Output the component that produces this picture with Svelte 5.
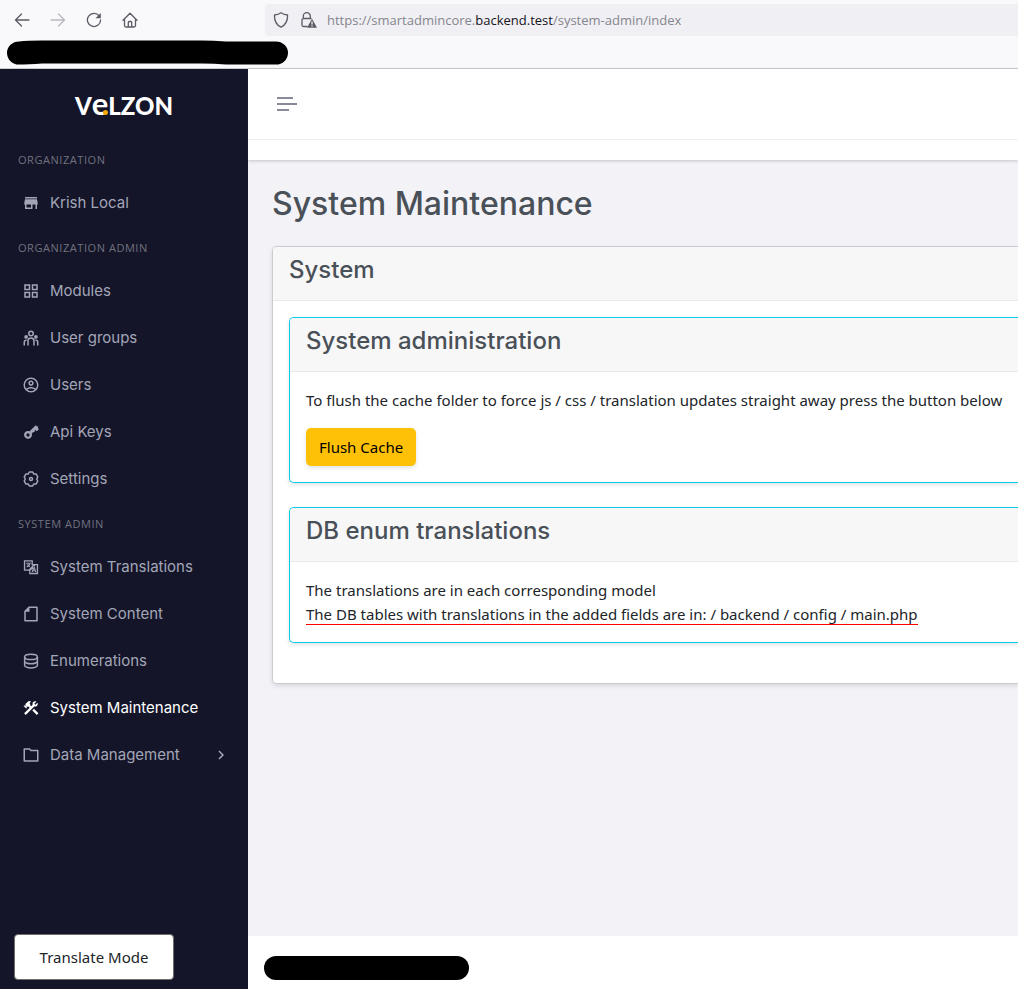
<script>
  const icons = {
    store: 'M12,18H6V14H12M21,14V12L20,7H4L3,12V14H4V20H14V14H18V20H20V14M20,4H4V6H20V4Z',
    modules: 'M3 3h8v8H3zM3 13h8v8H3zM13 3h8v8h-8zM13 13h8v8h-8zM15 5v4h4V5zM15 15v4h4v-4zM5 5v4h4V5zM5 15v4h4v-4z',
    team: 'M12 11a5 5 0 0 1 5 5v6h-2v-6a3 3 0 0 0-2.824-2.995L12 13a3 3 0 0 0-2.995 2.824L9 16v6H7v-6a5 5 0 0 1 5-5zm-6.5 3c.279 0 .55.033.81.094a5.947 5.947 0 0 0-.301 1.575L6 16v.086a1.492 1.492 0 0 0-.356-.08L5.500 16a1.500 1.500 0 0 0-1.493 1.356L4 17.500V22H2v-4.500A3.500 3.500 0 0 1 5.500 14zm13 0a3.500 3.500 0 0 1 3.500 3.500V22h-2v-4.500a1.500 1.500 0 0 0-1.356-1.493L18.500 16c-.175 0-.343.03-.5.085V16c0-.666-.108-1.306-.309-1.904.259-.063.53-.096.809-.096zm-13-6a2.500 2.500 0 1 1 0 5 2.500 2.500 0 0 1 0-5zm13 0a2.500 2.500 0 1 1 0 5 2.500 2.500 0 0 1 0-5zM12 2a4 4 0 1 1 0 8 4 4 0 0 1 0-8zm0 2a2 2 0 1 0 0 4 2 2 0 0 0 0-4z',
    user: 'M12,2A10,10 0 0,0 2,12A10,10 0 0,0 12,22A10,10 0 0,0 22,12A10,10 0 0,0 12,2M7.07,18.28C7.5,17.38 10.12,16.5 12,16.5C13.88,16.5 16.5,17.38 16.93,18.28C15.57,19.36 13.86,20 12,20C10.14,20 8.43,19.36 7.07,18.28M18.36,16.83C16.93,15.09 13.46,14.5 12,14.5C10.54,14.5 7.07,15.09 5.64,16.83C4.62,15.5 4,13.82 4,12C4,7.59 7.59,4 12,4C16.41,4 20,7.59 20,12C20,13.82 19.38,15.5 18.36,16.83M12,6C10.06,6 8.5,7.56 8.5,9.5C8.5,11.44 10.06,13 12,13C13.94,13 15.5,11.44 15.5,9.5C15.5,7.56 13.94,6 12,6M12,11A1.5,1.5 0 0,1 10.5,9.5A1.5,1.5 0 0,1 12,8A1.5,1.5 0 0,1 13.5,9.5A1.5,1.5 0 0,1 12,11Z',
    key: 'M8 10.500a5.500 5.500 0 0 1 2.200.5L18.300 3l1.700 1.700 1.700-.3-.6 2.100 1.500 1.700-2.900 2.900-2-1.900-1 1 .3 1.700-2.300.4-1.700 1.700A5.300 5.300 0 1 1 8 10.500zM8 13.800a2.200 2.200 0 1 0 0 4.400 2.200 2.200 0 0 0 0-4.400z',
    translate: 'M2.500 3h12v5H21.500v13.500h-12V17h-7zM4.300 4.800v10.400H9L14.300 9.500H12.700V4.800zM11 17.300v2.400h8.700V9.700H18zM5.500 6.300h6v1.500L9.800 10l1.200 1-1 1.300-1.500-1-1.700 1.400-1-1.200L7.500 10 6 8.500h3l.5-.8h-4zM15.200 11h1.600l2.300 7.700h-1.800l-.4-1.600h-1.800l-.4 1.600h-1.800zM16 13.300l-.5 2.300h1z',
    file: 'M9 2h11a1 1 0 0 1 1 1v18a1 1 0 0 1-1 1H4a1 1 0 0 1-1-1V8zm1 2v5H5v11h14V4z',
    tools: 'M13.78 15.3L19.78 21.3L21.89 19.14L15.89 13.14L13.78 15.3M17.5 10.1C17.11 10.1 16.69 10.05 16.36 9.91L4.97 21.25L2.86 19.14L10.27 11.74L8.5 9.96L7.78 10.66L6.33 9.25V12.11L5.63 12.81L2.11 9.25L2.81 8.55H5.62L4.22 7.14L7.78 3.58C8.95 2.41 10.83 2.41 12 3.58L9.89 5.74L11.3 7.14L10.59 7.85L12.38 9.63L14.2 7.75C14.06 7.42 14 7 14 6.63C14 4.66 15.56 3.11 17.5 3.11C18.09 3.11 18.61 3.25 19.08 3.53L16.41 6.2L17.91 7.7L20.58 5.03C20.86 5.5 21 6 21 6.63C21 8.55 19.45 10.1 17.5 10.1Z',
    folder: 'M4 5v14h16V7h-8.414l-2-2H4zm8.414 0H21a1 1 0 0 1 1 1v14a1 1 0 0 1-1 1H3a1 1 0 0 1-1-1V4a1 1 0 0 1 1-1h7.414l2 2z'
  };

  const groups = [
    { title: 'Organization', items: [{ label: 'Krish Local', icon: 'store' }] },
    {
      title: 'Organization admin',
      items: [
        { label: 'Modules', icon: 'modules' },
        { label: 'User groups', icon: 'team' },
        { label: 'Users', icon: 'user' },
        { label: 'Api Keys', icon: 'key' },
        { label: 'Settings', icon: 'settings' }
      ]
    },
    {
      title: 'System admin',
      items: [
        { label: 'System Translations', icon: 'translate' },
        { label: 'System Content', icon: 'file' },
        { label: 'Enumerations', icon: 'database' },
        { label: 'System Maintenance', icon: 'tools', active: true },
        { label: 'Data Management', icon: 'folder', expandable: true }
      ]
    }
  ];
</script>

<div class="window">
  <header class="browser">
    <div class="toolbar">
      <div class="nav-buttons">
        <button aria-label="Back">
          <svg viewBox="0 0 16 16"><path d="M15 8H2M7.500 2L1.500 8l6 6" /></svg>
        </button>
        <button aria-label="Forward" disabled>
          <svg viewBox="0 0 16 16"><path d="M1 8h13M8.500 2l6 6-6 6" /></svg>
        </button>
        <button aria-label="Reload">
          <svg viewBox="0 0 16 16"><path d="M13.300 4A6.600 6.600 0 1 0 14.600 8" /><path class="solid" d="M14.800 1v5.200H9.500z" /></svg>
        </button>
        <button aria-label="Home">
          <svg viewBox="0 0 16 16"><path d="M1 8.200L8 1.200l7 7M2.500 7v6.500a1.500 1.500 0 0 0 1.500 1.500h8a1.500 1.500 0 0 0 1.500-1.500V7M6.300 15v-4.500a1 1 0 0 1 1-1h1.400a1 1 0 0 1 1 1V15" /></svg>
        </button>
      </div>
      <div class="address">
        <svg viewBox="0 0 16 16"><path d="M8 .8c2 1.500 4.200 2 6.500 2.200.300 5.500-1.500 9.800-6.500 12.200C3 12.800 1.200 8.500 1.500 3 3.800 2.800 6 2.300 8 .8z" /></svg>
        <svg class="lock" viewBox="0 0 16 16">
          <path d="M6 14.500H2.500A1.500 1.500 0 0 1 1 13V8A1.500 1.500 0 0 1 2.500 6.500h7.500M2.300 6.500V4.200a3.500 3.500 0 0 1 7 0V6.500" />
          <path class="solid" d="M11 6.800L16 15.800H6z" />
          <path class="mark" d="M11 9.500v3M11 13.300v1.200" />
        </svg>
        <span>https://smartadmincore.<b>backend.test</b>/system-admin/index</span>
      </div>
    </div>
    <div class="bookmarks">
      <svg viewBox="0 0 282 26" preserveAspectRatio="none"><path d="M13 1.500Q22 .5 36 .5H195Q208 .5 220 1.500H270a12 12 0 0 1 0 24H220Q208 24.500 196 24.500H36Q22 25.500 13 25.500a12 12 0 0 1 0-24z" /></svg>
    </div>
  </header>

  <div class="app">
    <aside>
      <a class="logo" href="#home" aria-label="Velzon">V<span class="e">e</span>LZON</a>
      <nav>
        {#each groups as group}
          <h2>{group.title}</h2>
          <ul>
            {#each group.items as item}
              <li>
                <a href="#item" class:active={item.active}>
                  <svg viewBox="0 0 24 24">
                    {#if item.icon === 'settings'}
                      <g class="line">
                        <path d="M9.800 2.800h4.400L15.800 5.400l2.900-.1 2.300 4L19.600 12l1.400 2.700-2.300 4-2.900-.1-1.600 2.600H9.800L8.200 18.600l-2.900.1-2.300-4L4.400 12 3 9.300l2.300-4 2.900.1z" />
                        <circle cx="12" cy="12" r="2" />
                      </g>
                    {:else if item.icon === 'database'}
                      <g class="line">
                        <ellipse cx="12" cy="6.500" rx="8.500" ry="3.500" />
                        <path d="M3.500 6.500v11c0 2 3.800 3.700 8.500 3.700s8.500-1.700 8.500-3.700v-11M3.500 12c0 2 3.800 3.700 8.500 3.700s8.500-1.700 8.500-3.700" />
                      </g>
                    {:else}
                      <path fill-rule="evenodd" d={icons[item.icon]} />
                    {/if}
                  </svg>
                  <span>{item.label}</span>
                  {#if item.expandable}
                    <svg class="chevron" viewBox="0 0 24 24"><path d="M8.600 16.600L13.200 12 8.600 7.400 10 6l6 6-6 6z" /></svg>
                  {/if}
                </a>
              </li>
            {/each}
          </ul>
        {/each}
      </nav>
      <button class="translate">Translate Mode</button>
    </aside>

    <div class="page">
      <div class="topbar">
        <button class="burger" aria-label="Toggle menu"><i></i><i></i><i></i></button>
      </div>
      <main>
        <h1>System Maintenance</h1>
        <section class="card">
          <h3>System</h3>
          <div class="body">
            <section class="card info">
              <h3>System administration</h3>
              <div class="body">
                <p>To flush the cache folder to force js / css / translation updates straight away press the button below</p>
                <button class="flush">Flush Cache</button>
              </div>
            </section>
            <section class="card info">
              <h3>DB enum translations</h3>
              <div class="body">
                <p>The translations are in each corresponding model<br /><span class="marked">The DB tables with translations in the added fields are in: / backend / config / main.php</span></p>
              </div>
            </section>
          </div>
        </section>
      </main>
      <footer><div class="bar"></div></footer>
    </div>
  </div>
</div>

<style>
  :global(body) {
    margin: 0;
    overflow-x: hidden;
  }
  .window {
    min-height: 100vh;
    display: flex;
    flex-direction: column;
    font: 15px/24px "Noto Sans", "Open Sans", sans-serif;
    color: #212529;
  }
  .window :global(*) {
    box-sizing: border-box;
  }
  button {
    font: inherit;
    color: inherit;
    cursor: pointer;
  }
  a {
    color: inherit;
    text-decoration: none;
  }
  .browser {
    background: #f9f9fb;
    border-bottom: 1px solid #ccccce;
  }
  .toolbar {
    display: flex;
    align-items: center;
    height: 40px;
  }
  .nav-buttons {
    display: flex;
    gap: 20px;
    width: 265px;
    padding-left: 14px;
    flex: none;
  }
  .nav-buttons button {
    display: flex;
    padding: 0;
    border: 0;
    background: none;
  }
  .nav-buttons button:disabled {
    opacity: 0.4;
  }
  .toolbar svg {
    width: 16px;
    height: 16px;
    flex: none;
    fill: none;
    stroke: #5b5b66;
    stroke-width: 1.3;
    stroke-linecap: round;
    stroke-linejoin: round;
  }
  .toolbar .solid {
    fill: #5b5b66;
    stroke: none;
  }
  .toolbar .mark {
    stroke: #f0f0f4;
    stroke-linecap: butt;
  }
  .address {
    display: flex;
    align-items: center;
    flex: 1;
    height: 32px;
    padding-left: 8px;
    background: #f0f0f4;
    border-radius: 4px 0 0 4px;
    font: 13px/24px "Open Sans", sans-serif;
    color: #85858e;
    white-space: nowrap;
  }
  .address .lock {
    margin: 0 10px 0 12px;
  }
  .address b {
    font-weight: 400;
    color: #15141a;
  }
  .bookmarks {
    height: 28px;
    padding-left: 6px;
  }
  .bookmarks svg {
    display: block;
    width: 282px;
    height: 25px;
  }
  .app {
    flex: 1;
    display: flex;
  }
  aside {
    width: 248px;
    flex: none;
    display: flex;
    flex-direction: column;
    background: #141529;
    color: #a3a6b7;
    font-family: Inter, sans-serif;
  }
  .logo {
    height: 69px;
    padding-top: 22px;
    text-align: center;
    font: 900 24px/24px Lato, sans-serif;
    color: #fff;
  }
  .e {
    position: relative;
    font-size: 31px;
    font-weight: 700;
  }
  .e::after {
    content: "";
    position: absolute;
    right: 0;
    bottom: 7px;
    width: 5px;
    height: 5px;
    border-radius: 50%;
    background: #f7a800;
  }
  nav h2 {
    margin: 0;
    height: 41px;
    padding: 2px 18px 0;
    font: 400 11px/39px "Open Sans", sans-serif;
    letter-spacing: 0.05em;
    text-transform: uppercase;
    color: #70727f;
  }
  ul {
    list-style: none;
    margin: 0;
    padding: 0;
  }
  li a {
    display: flex;
    align-items: center;
    height: 47px;
    padding: 0 18px 0 22px;
    gap: 10px;
  }
  li a svg {
    width: 18px;
    height: 18px;
    flex: none;
    fill: currentColor;
  }
  li a .line {
    fill: none;
    stroke: currentColor;
    stroke-width: 2;
    stroke-linejoin: round;
  }
  li a.active {
    color: #fff;
  }
  li a .chevron {
    margin-left: auto;
  }
  .translate {
    width: 160px;
    height: 46px;
    margin: auto 0 9px 14px;
    border: 1px solid #6c6c6c;
    border-radius: 4px;
    background: #fff;
    color: #212529;
    font-family: "Noto Sans", sans-serif;
  }
  .page {
    flex: 1;
    min-width: 0;
    display: flex;
    flex-direction: column;
    background: #f2f2f7;
  }
  .topbar {
    background: #fff;
    padding-bottom: 20px;
    box-shadow: 0 1px 3px rgba(56, 65, 74, 0.25);
  }
  .burger {
    display: flex;
    flex-direction: column;
    justify-content: center;
    align-items: flex-start;
    gap: 4px;
    width: 100%;
    height: 71px;
    padding: 0 29px;
    border: 0;
    border-bottom: 1px solid #eeeff1;
    background: none;
  }
  .burger i {
    width: 20px;
    height: 2px;
    background: #878a99;
  }
  .burger i:first-child {
    width: 16px;
  }
  .burger i:last-child {
    width: 12px;
  }
  main {
    flex: 1;
    padding: 24px 0 0 24px;
  }
  h1,
  h3 {
    margin: 0;
    font-family: Inter, sans-serif;
    font-weight: 500;
    color: #495057;
  }
  h1 {
    font-size: 32px;
    line-height: 40px;
    margin-bottom: 22px;
  }
  h3 {
    padding: 8px 16px 15px;
    font-size: 24px;
    line-height: 30px;
    background: #f7f7f7;
    border-bottom: 1px solid #e9e9ea;
    border-radius: 4px 0 0 0;
  }
  .card {
    background: #fff;
    border: 1px solid #ccccd0;
    border-right: 0;
    border-radius: 5px 0 0 5px;
    box-shadow: 0 2px 4px rgba(56, 65, 74, 0.15);
  }
  .card.info {
    border-color: #0ec9ea;
    margin-bottom: 24px;
  }
  .body {
    padding: 16px 0 16px 16px;
  }
  p {
    margin: 0;
  }
  .flush {
    display: block;
    height: 38px;
    margin-top: 16px;
    padding: 0 13px;
    border: 0;
    border-radius: 5px;
    background: #ffc107;
    color: #000;
    box-shadow: 0 2px 4px rgba(56, 65, 74, 0.15);
  }
  .marked {
    border-bottom: 1px solid #f00;
  }
  footer {
    height: 53px;
    padding: 20px 16px;
    background: #fff;
  }
  .bar {
    width: 205px;
    height: 24px;
    border-radius: 12px;
    background: #000;
  }
</style>
